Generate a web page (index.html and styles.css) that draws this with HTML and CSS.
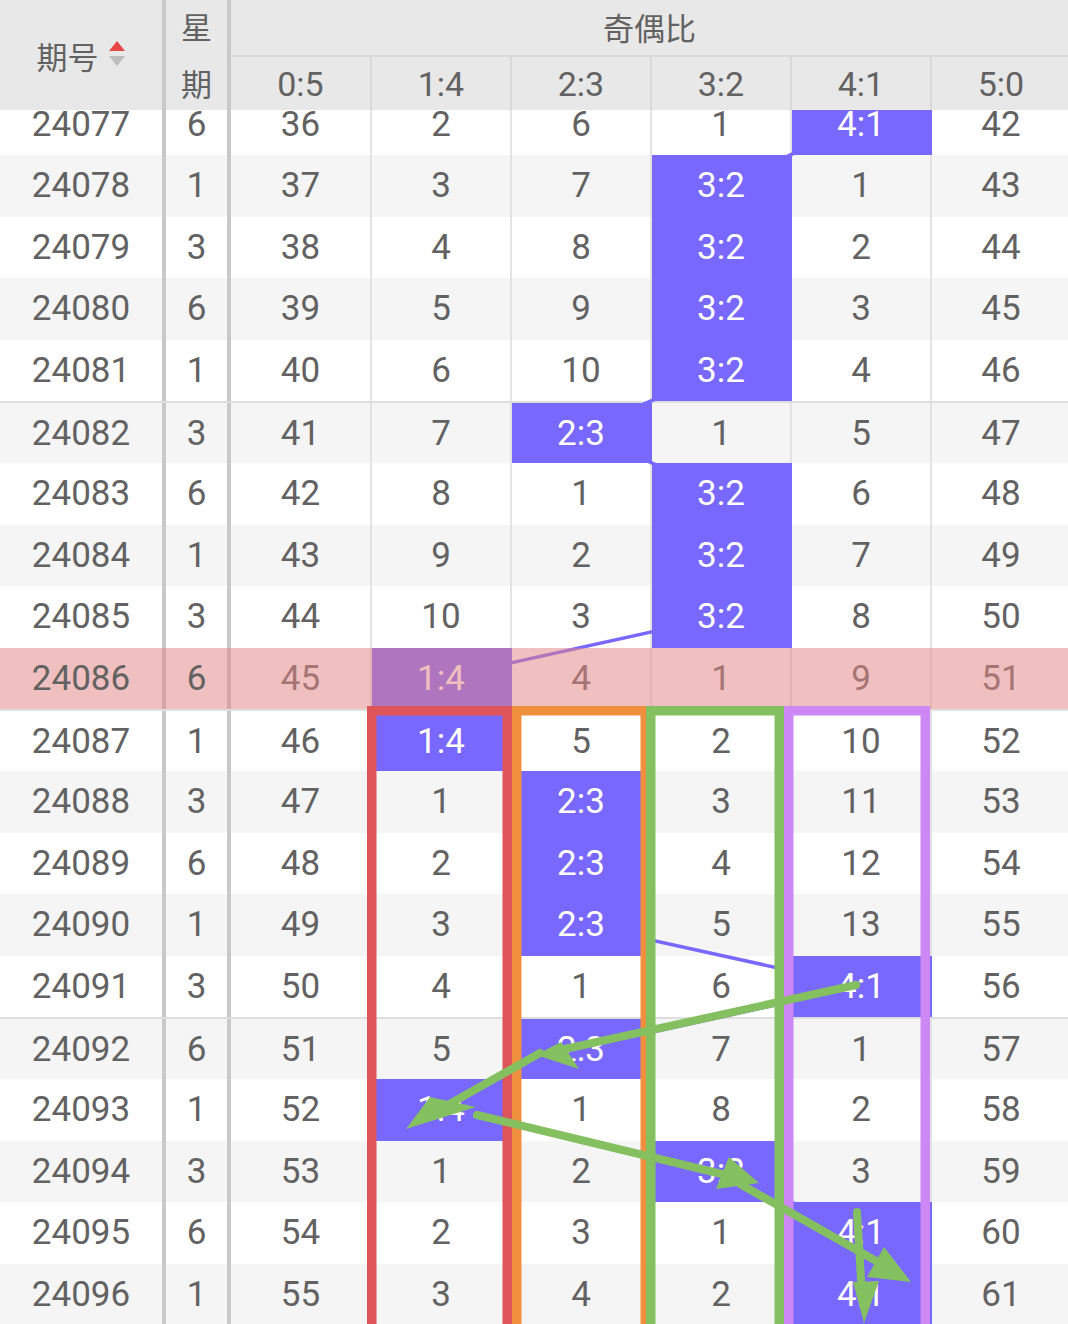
FILE: index.html
```html
<!DOCTYPE html>
<html lang="zh-CN">
<head>
<meta charset="utf-8">
<title>奇偶比</title>
<link rel="stylesheet" href="styles.css">
</head>
<body>
<div class="page">
  <div class="head">
    <div class="h-id"><span class="h-txt">期号</span><svg class="sort" width="18" height="30" viewBox="0 0 18 30"><polygon points="9,0 17,10 1,10" fill="#e84545"/><polygon points="1,15 17,15 9,25" fill="#bdbdbd"/></svg></div>
    <div class="h-wk"><span>星</span><span>期</span></div>
    <div class="h-grp">奇偶比</div>
    <div class="h-r">0:5</div>
    <div class="h-r">1:4</div>
    <div class="h-r">2:3</div>
    <div class="h-r">3:2</div>
    <div class="h-r">4:1</div>
    <div class="h-r">5:0</div>
  </div>
  <div class="body">
    <div class="rows">
      <svg class="trend" width="1068" height="1232" viewBox="0 0 1068 1232">
        <polyline fill="none" stroke="#7868fe" stroke-width="3.5" points="861,30.8 721,92.4 721,154 721,215.6 721,277.2 581,338.8 721,400.4 721,462 721,523.6 441,585.2 441,646.8 581,708.4 581,770 581,831.6 861,893.2 581,954.8 441,1016.4 721,1078 861,1139.6 861,1201.2"/>
      </svg>
      <div class="row"><div class="c id">24077</div><div class="c wk">6</div><div class="c r">36</div><div class="c r">2</div><div class="c r">6</div><div class="c r">1</div><div class="c r hit">4:1</div><div class="c r">42</div></div>
      <div class="row"><div class="c id">24078</div><div class="c wk">1</div><div class="c r">37</div><div class="c r">3</div><div class="c r">7</div><div class="c r hit">3:2</div><div class="c r">1</div><div class="c r">43</div></div>
      <div class="row"><div class="c id">24079</div><div class="c wk">3</div><div class="c r">38</div><div class="c r">4</div><div class="c r">8</div><div class="c r hit">3:2</div><div class="c r">2</div><div class="c r">44</div></div>
      <div class="row"><div class="c id">24080</div><div class="c wk">6</div><div class="c r">39</div><div class="c r">5</div><div class="c r">9</div><div class="c r hit">3:2</div><div class="c r">3</div><div class="c r">45</div></div>
      <div class="row"><div class="c id">24081</div><div class="c wk">1</div><div class="c r">40</div><div class="c r">6</div><div class="c r">10</div><div class="c r hit">3:2</div><div class="c r">4</div><div class="c r">46</div></div>
      <div class="row sep"><div class="c id">24082</div><div class="c wk">3</div><div class="c r">41</div><div class="c r">7</div><div class="c r hit">2:3</div><div class="c r">1</div><div class="c r">5</div><div class="c r">47</div></div>
      <div class="row"><div class="c id">24083</div><div class="c wk">6</div><div class="c r">42</div><div class="c r">8</div><div class="c r">1</div><div class="c r hit">3:2</div><div class="c r">6</div><div class="c r">48</div></div>
      <div class="row"><div class="c id">24084</div><div class="c wk">1</div><div class="c r">43</div><div class="c r">9</div><div class="c r">2</div><div class="c r hit">3:2</div><div class="c r">7</div><div class="c r">49</div></div>
      <div class="row"><div class="c id">24085</div><div class="c wk">3</div><div class="c r">44</div><div class="c r">10</div><div class="c r">3</div><div class="c r hit">3:2</div><div class="c r">8</div><div class="c r">50</div></div>
      <div class="row hl"><div class="c id"><span class="top">24086</span></div><div class="c wk"><span class="top">6</span></div><div class="c r">45</div><div class="c r hit">1:4</div><div class="c r">4</div><div class="c r">1</div><div class="c r">9</div><div class="c r">51</div></div>
      <div class="row sep"><div class="c id">24087</div><div class="c wk">1</div><div class="c r">46</div><div class="c r hit">1:4</div><div class="c r">5</div><div class="c r">2</div><div class="c r">10</div><div class="c r">52</div></div>
      <div class="row"><div class="c id">24088</div><div class="c wk">3</div><div class="c r">47</div><div class="c r">1</div><div class="c r hit">2:3</div><div class="c r">3</div><div class="c r">11</div><div class="c r">53</div></div>
      <div class="row"><div class="c id">24089</div><div class="c wk">6</div><div class="c r">48</div><div class="c r">2</div><div class="c r hit">2:3</div><div class="c r">4</div><div class="c r">12</div><div class="c r">54</div></div>
      <div class="row"><div class="c id">24090</div><div class="c wk">1</div><div class="c r">49</div><div class="c r">3</div><div class="c r hit">2:3</div><div class="c r">5</div><div class="c r">13</div><div class="c r">55</div></div>
      <div class="row"><div class="c id">24091</div><div class="c wk">3</div><div class="c r">50</div><div class="c r">4</div><div class="c r">1</div><div class="c r">6</div><div class="c r hit">4:1</div><div class="c r">56</div></div>
      <div class="row sep"><div class="c id">24092</div><div class="c wk">6</div><div class="c r">51</div><div class="c r">5</div><div class="c r hit">2:3</div><div class="c r">7</div><div class="c r">1</div><div class="c r">57</div></div>
      <div class="row"><div class="c id">24093</div><div class="c wk">1</div><div class="c r">52</div><div class="c r hit">1:4</div><div class="c r">1</div><div class="c r">8</div><div class="c r">2</div><div class="c r">58</div></div>
      <div class="row"><div class="c id">24094</div><div class="c wk">3</div><div class="c r">53</div><div class="c r">1</div><div class="c r">2</div><div class="c r hit">3:2</div><div class="c r">3</div><div class="c r">59</div></div>
      <div class="row"><div class="c id">24095</div><div class="c wk">6</div><div class="c r">54</div><div class="c r">2</div><div class="c r">3</div><div class="c r">1</div><div class="c r hit">4:1</div><div class="c r">60</div></div>
      <div class="row"><div class="c id">24096</div><div class="c wk">1</div><div class="c r">55</div><div class="c r">3</div><div class="c r">4</div><div class="c r">2</div><div class="c r hit">4:1</div><div class="c r">61</div></div>
    </div>
  </div>
  <svg class="notes" width="1068" height="1324" viewBox="0 0 1068 1324">
    <g fill="none" stroke-width="9.5">
      <rect x="371.75" y="710.75" width="135.5" height="620" stroke="#df5459"/>
      <rect x="516.75" y="710.75" width="128.5" height="620" stroke="#f0903f"/>
      <rect x="650.75" y="710.75" width="128.5" height="620" stroke="#84c060"/>
      <rect x="788.75" y="710.75" width="136.5" height="620" stroke="#cd88f6"/>
    </g>
    <g stroke="#84c060" stroke-width="8" stroke-linecap="round" fill="none">
      <line x1="856" y1="985" x2="556" y2="1051"/>
      <line x1="540" y1="1053" x2="430" y2="1115"/>
      <line x1="477" y1="1115" x2="730" y2="1176"/>
      <line x1="740" y1="1184" x2="885" y2="1266"/>
      <line x1="857" y1="1212" x2="862" y2="1296"/>
    </g>
    <g fill="#84c060">
      <polygon points="536,1055 579,1069 561,1042"/>
      <polygon points="406,1129 430,1097 476,1107"/>
      <polygon points="729,1157 759,1183 716,1189"/>
      <polygon points="884,1247 911,1282 867,1277"/>
      <polygon points="853,1282 879,1281 864,1323"/>
    </g>
  </svg>
</div>
</body>
</html>
```

FILE: styles.css
```css
html, body {
  margin: 0;
  padding: 0;
  background: #ffffff;
}

.page {
  position: relative;
  width: 1068px;
  height: 1324px;
  overflow: hidden;
  font-family: Roboto, "Noto Sans", "Noto Sans CJK SC", sans-serif;
  color: #626262;
}

/* ---------- header ---------- */
.head {
  display: grid;
  grid-template-columns: 166px 65px 141px repeat(5, 140px);
  grid-template-rows: 57px 53px;
  height: 110px;
  background: #e8e8e8;
  width: 1072px;
}

.h-id {
  grid-row: 1 / span 2;
  border-right: 4px solid #c9c9c9;
  display: flex;
  align-items: center;
  justify-content: center;
  gap: 9px;
  font-family: "Noto Sans CJK SC", sans-serif;
  font-size: 31px;
}

.h-txt {
  line-height: 1;
}

.sort {
  display: block;
  margin-top: 2px;
}

.h-wk {
  grid-row: 1 / span 2;
  border-right: 4px solid #c9c9c9;
  display: flex;
  flex-direction: column;
  align-items: center;
  justify-content: space-between;
  padding: 10px 0 12px;
  font-family: "Noto Sans CJK SC", sans-serif;
  font-size: 31px;
  line-height: 1;
}

.h-grp {
  grid-column: 3 / span 6;
  border-bottom: 2px solid #d9d9d9;
  display: flex;
  align-items: center;
  justify-content: center;
  padding-right: 4px;
  padding-bottom: 3px;
  font-family: "Noto Sans CJK SC", sans-serif;
  font-size: 31px;
}

.h-r {
  display: flex;
  align-items: center;
  justify-content: center;
  font-size: 34px;
  border-right: 2px solid #d9d9d9;
}

/* ---------- body ---------- */
.body {
  position: relative;
  z-index: 0;
  height: 1214px;
  overflow: hidden;
}

.rows {
  position: relative;
  margin-top: -16.6px;
  width: 1072px;
}

.trend {
  position: absolute;
  left: 0;
  top: 0;
  z-index: 1;
}

.row {
  display: grid;
  grid-template-columns: 166px 65px 141px repeat(5, 140px);
  height: 61.6px;
  box-sizing: border-box;
  background: #ffffff;
}

.row:nth-child(odd) {
  background: #f5f5f5;
}

.row.sep {
  border-top: 2px solid #dedede;
}

.c {
  display: flex;
  align-items: center;
  justify-content: center;
  font-size: 35px;
  line-height: 1;
  box-sizing: border-box;
}

.c.id {
  border-right: 4px solid #c9c9c9;
}

.c.wk {
  border-right: 4px solid #c9c9c9;
}

.c.r {
  border-right: 2px solid #e3e3e3;
}

.c.hit {
  position: relative;
  z-index: 2;
  background: #7868fe;
  color: #ffffff;
  border-right-color: transparent;
}

/* highlighted issue row */
.row.hl {
  position: relative;
  background: #ffffff;
}

.row.hl::after {
  content: "";
  position: absolute;
  left: 0;
  top: 0;
  right: 0;
  bottom: 0;
  z-index: 3;
  background: rgba(226, 133, 133, 0.52);
}

.top {
  position: relative;
  z-index: 4;
}

/* ---------- annotations ---------- */
.notes {
  position: absolute;
  left: 0;
  top: 0;
  z-index: 10;
  pointer-events: none;
}
```
